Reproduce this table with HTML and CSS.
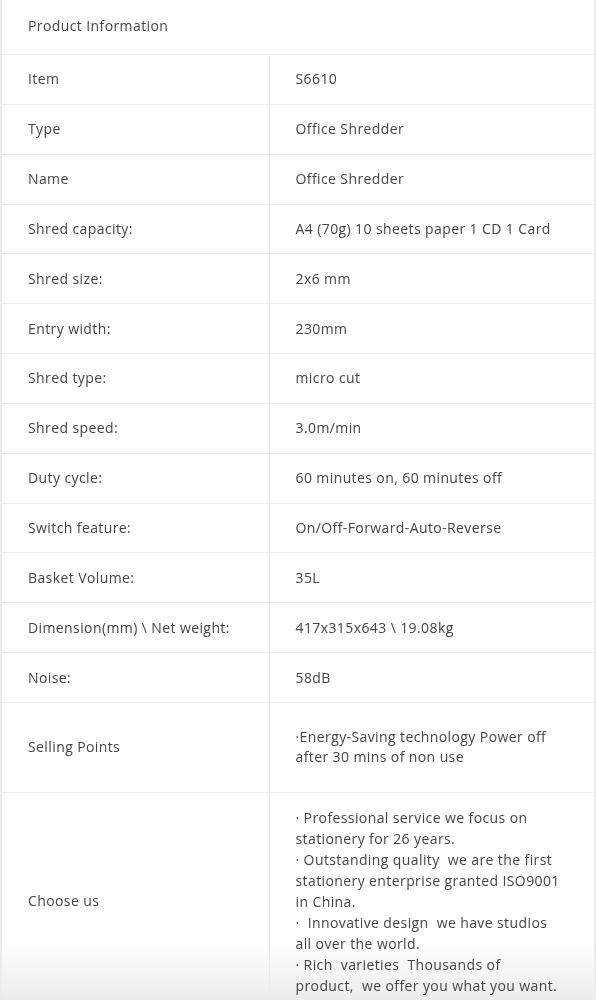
FILE: index.html
```html
<!DOCTYPE html>
<html lang="en">
<head>
<meta charset="utf-8">
<title>Product Information</title>
<link rel="stylesheet" href="styles.css">
</head>
<body>
<table class="spec">
  <colgroup><col class="c1"><col class="c2"></colgroup>
  <thead>
    <tr><th colspan="2" class="head">Product Information</th></tr>
  </thead>
  <tbody>
    <tr><td class="k">Item</td><td class="v">S6610</td></tr>
    <tr><td class="k">Type</td><td class="v">Office Shredder</td></tr>
    <tr><td class="k">Name</td><td class="v">Office Shredder</td></tr>
    <tr><td class="k">Shred capacity:</td><td class="v">A4 (70g) 10 sheets paper 1 CD 1 Card</td></tr>
    <tr><td class="k">Shred size:</td><td class="v">2x6 mm</td></tr>
    <tr><td class="k">Entry width:</td><td class="v">230mm</td></tr>
    <tr><td class="k">Shred type:</td><td class="v">micro cut</td></tr>
    <tr><td class="k">Shred speed:</td><td class="v">3.0m/min</td></tr>
    <tr><td class="k">Duty cycle:</td><td class="v">60 minutes on, 60 minutes off</td></tr>
    <tr><td class="k">Switch feature:</td><td class="v">On/Off-Forward-Auto-Reverse</td></tr>
    <tr><td class="k">Basket Volume:</td><td class="v">35L</td></tr>
    <tr><td class="k">Dimension(mm) \ Net weight:</td><td class="v">417x315x643 \ 19.08kg</td></tr>
    <tr><td class="k">Noise:</td><td class="v">58dB</td></tr>
    <tr class="tall"><td class="k">Selling Points</td><td class="v">·Energy-Saving technology Power off<br>after 30 mins of non use</td></tr>
    <tr class="long"><td class="k">Choose us</td><td class="v">· Professional service we focus on<br>stationery for 26 years.<br>· Outstanding quality&nbsp; we are the first<br>stationery enterprise granted ISO9001<br>in China.<br>·&nbsp; Innovative design&nbsp; we have studios<br>all over the world.<br>· Rich&nbsp; varieties&nbsp; Thousands of<br>product,&nbsp; we offer you what you want.</td></tr>
  </tbody>
</table>
<div class="fade"></div>
</body>
</html>
```
FILE: styles.css
```css
html, body {
  margin: 0;
  padding: 0;
}
html {
  background: #fff;
}
body {
  font-family: "Open Sans", "Liberation Sans", sans-serif;
  font-size: 14px;
  letter-spacing: 0.4px;
  color: #454545;
  overflow: hidden;
}
.spec {
  width: 596px;
  border-collapse: collapse;
  table-layout: fixed;
  border: 2px solid #ececec;
  border-top: 0;
}
.c1 {
  width: 268px;
}
.spec th, .spec td {
  border: 1px solid #ececec;
  padding: 0 20px 0 26px;
  height: 48.85px;
  vertical-align: middle;
  text-align: left;
  font-weight: 400;
  line-height: 20px;
  white-space: nowrap;
}
.spec .head {
  border-top: 0;
  height: 51px;
  padding-bottom: 3px;
}
.tall td {
  height: 89px;
}
.long td {
  padding-top: 14px;
  padding-bottom: 14px;
}
.long .v {
  line-height: 21px;
}
.fade {
  position: fixed;
  left: 0;
  right: 0;
  bottom: 0;
  height: 60px;
  z-index: -1;
  background: linear-gradient(to bottom, rgba(238,238,238,0), rgba(236,236,236,1));
  pointer-events: none;
}
```
